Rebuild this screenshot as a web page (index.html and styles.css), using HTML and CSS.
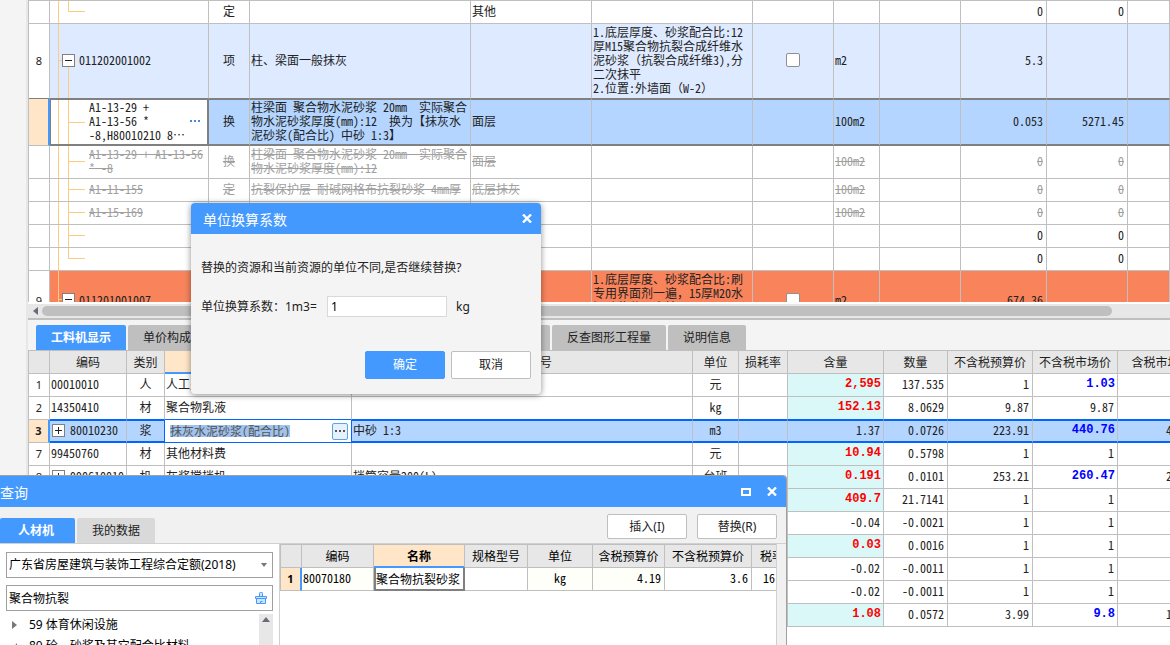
FILE: index.html
```html
<!DOCTYPE html>
<html lang="zh-CN">
<head>
<meta charset="utf-8">
<title>单位换算系数</title>
<link rel="stylesheet" href="styles.css">
</head>
<body>
<main class="workspace">
  <section class="bill-panel">
    <table class="grid bill-grid">
      <colgroup><col class="w-index"><col class="w-bill-code"><col class="w-kind"><col class="w-name"><col class="w-part"><col class="w-desc"><col class="w-check"><col class="w-unit"><col class="w-check"><col class="w-qty"><col class="w-price"><col></colgroup>
      <tbody>
      <tr class="row"><td></td><td class="tree leaf last"></td><td class="center">定</td><td></td><td>其他</td><td></td><td></td><td></td><td></td><td class="num">0</td><td class="num">0</td><td></td></tr>
      <tr class="row item item-tall before-current"><td class="center index">8</td><td class="tree parent"><div class="node"><button class="toggle minus" aria-label="折叠"></button>011202001002</div></td><td class="center">项</td><td>柱、梁面一般抹灰</td><td></td><td>1.底层厚度、砂浆配合比:12<br>厚M15聚合物抗裂合成纤维水<br>泥砂浆（抗裂合成纤维3),分<br>二次抹平<br>2.位置:外墙面（W-2）</td><td class="center"><input class="check" type="checkbox" aria-label="选择清单 8"></td><td>m2</td><td></td><td class="num">5.3</td><td></td><td></td></tr>
      <tr class="row current"><td class="index marked"></td><td class="tree leaf active-code"><div class="code-edit"><span>A1-13-29 +<br>A1-13-56 *<br>-8,H80010210 8…</span><button class="dots" aria-label="更多"><i></i><i></i><i></i></button></div></td><td class="center">换</td><td>柱梁面 聚合物水泥砂浆 20mm  实际聚合<br>物水泥砂浆厚度(mm):12  换为【抹灰水<br>泥砂浆(配合比) 中砂 1:3】</td><td>面层</td><td></td><td></td><td>100m2</td><td></td><td class="num">0.053</td><td class="num">5271.45</td><td></td></tr>
      <tr class="row struck row-double"><td></td><td class="tree leaf">A1-13-29 + A1-13-56<br>* -8</td><td class="center">换</td><td>柱梁面 聚合物水泥砂浆 20mm  实际聚合<br>物水泥砂浆厚度(mm):12</td><td>面层</td><td></td><td></td><td>100m2</td><td></td><td class="num">0</td><td class="num">0</td><td></td></tr>
      <tr class="row struck"><td></td><td class="tree leaf">A1-11-155</td><td class="center">定</td><td>抗裂保护层 耐碱网格布抗裂砂浆 4mm厚</td><td>底层抹灰</td><td></td><td></td><td>100m2</td><td></td><td class="num">0</td><td class="num">0</td><td></td></tr>
      <tr class="row struck"><td></td><td class="tree leaf">A1-15-169</td><td></td><td></td><td></td><td></td><td></td><td>100m2</td><td></td><td class="num">0</td><td class="num">0</td><td></td></tr>
      <tr class="row"><td></td><td class="tree leaf"></td><td></td><td></td><td></td><td></td><td></td><td></td><td></td><td class="num">0</td><td class="num">0</td><td></td></tr>
      <tr class="row"><td></td><td class="tree leaf last"></td><td></td><td></td><td></td><td></td><td></td><td></td><td></td><td class="num">0</td><td class="num">0</td><td></td></tr>
      <tr class="row item item-alert"><td class="center index">9</td><td class="tree parent"><div class="node"><button class="toggle minus" aria-label="折叠"></button>011201001007</div></td><td></td><td></td><td></td><td>1.底层厚度、砂浆配合比:刷<br>专用界面剂一遍，15厚M20水<br>泥砂浆分二次抹平<br>2.位置:内墙面</td><td class="center"><input class="check" type="checkbox" aria-label="选择清单 9"></td><td>m2</td><td></td><td class="num">674.36</td><td></td><td></td></tr>
      </tbody>
    </table>
  </section>

  <div class="hscroll"><svg width="5" height="8" viewBox="0 0 5 8"><path d="M5 0v8L0 4z" fill="#6b6b78"/></svg><div class="hscroll-track"><div class="hscroll-thumb"></div></div></div>

  <nav class="tabs">
    <button class="tab active">工料机显示</button><button class="tab">单价构成</button><button class="tab">标准换算</button><button class="tab">换算信息</button><button class="tab">特征及内容</button><button class="tab">工程量明细</button><button class="tab">反查图形工程量</button><button class="tab">说明信息</button>
  </nav>

  <section class="resource-panel">
    <table class="grid resource-grid">
      <colgroup><col class="w-index"><col class="w-res-code"><col class="w-res-kind"><col class="w-res-name"><col class="w-spec"><col class="w-unit"><col class="w-loss"><col class="w-content"><col class="w-count"><col class="w-cost"><col class="w-cost"><col class="w-tax"></colgroup>
      <thead><tr class="row"><th></th><th>编码</th><th>类别</th><th class="sorted">名称</th><th>规格及型号</th><th>单位</th><th>损耗率</th><th>含量</th><th>数量</th><th>不含税预算价</th><th>不含税市场价</th><th>含税市场价</th></tr></thead>
      <tbody>
      <tr class="row"><td class="center index">1</td><td>00010010</td><td class="center">人</td><td>人工费</td><td></td><td class="center">元</td><td></td><td class="num changed">2,595</td><td class="num">137.535</td><td class="num">1</td><td class="num market">1.03</td><td></td></tr>
      <tr class="row before-picked"><td class="center index">2</td><td>14350410</td><td class="center">材</td><td>聚合物乳液</td><td></td><td class="center">kg</td><td></td><td class="num changed">152.13</td><td class="num">8.0629</td><td class="num">9.87</td><td class="num">9.87</td><td></td></tr>
      <tr class="row picked"><td class="center index marked">3</td><td><div class="res-node"><button class="toggle plus" aria-label="展开"></button>80010230</div></td><td class="center kind">浆</td><td class="editing"><div class="editor"><input class="editor-text" value="抹灰水泥砂浆(配合比)" aria-label="名称"><button class="more" aria-label="选择"><i></i><i></i><i></i></button></div></td><td>中砂 1:3</td><td class="center">m3</td><td></td><td class="num">1.37</td><td class="num">0.0726</td><td class="num">223.91</td><td class="num market">440.76</td><td class="num">454.24</td></tr>
      <tr class="row"><td class="center index">7</td><td>99450760</td><td class="center">材</td><td>其他材料费</td><td></td><td class="center">元</td><td></td><td class="num changed">10.94</td><td class="num">0.5798</td><td class="num">1</td><td class="num">1</td><td></td></tr>
      <tr class="row"><td class="center index">8</td><td><div class="res-node"><button class="toggle plus" aria-label="展开"></button>990610010</div></td><td class="center">机</td><td>灰浆搅拌机</td><td>拌筒容量200(L)</td><td class="center">台班</td><td></td><td class="num changed">0.191</td><td class="num">0.0101</td><td class="num">253.21</td><td class="num market">260.47</td><td class="num">267.12</td></tr>
      <tr class="row"><td></td><td></td><td></td><td></td><td></td><td></td><td></td><td class="num changed">409.7</td><td class="num">21.7141</td><td class="num">1</td><td class="num">1</td><td></td></tr>
      <tr class="row"><td></td><td></td><td></td><td></td><td></td><td></td><td></td><td class="num">-0.04</td><td class="num">-0.0021</td><td class="num">1</td><td class="num">1</td><td></td></tr>
      <tr class="row"><td></td><td></td><td></td><td></td><td></td><td></td><td></td><td class="num changed">0.03</td><td class="num">0.0016</td><td class="num">1</td><td class="num">1</td><td></td></tr>
      <tr class="row"><td></td><td></td><td></td><td></td><td></td><td></td><td></td><td class="num">-0.02</td><td class="num">-0.0011</td><td class="num">1</td><td class="num">1</td><td></td></tr>
      <tr class="row"><td></td><td></td><td></td><td></td><td></td><td></td><td></td><td class="num">-0.02</td><td class="num">-0.0011</td><td class="num">1</td><td class="num">1</td><td></td></tr>
      <tr class="row"><td></td><td></td><td></td><td></td><td></td><td></td><td></td><td class="num changed">1.08</td><td class="num">0.0572</td><td class="num">3.99</td><td class="num market">9.8</td><td class="num">11.074</td></tr>
      </tbody>
    </table>
  </section>
</main>

<section class="query-window" aria-label="查询">
  <header class="titlebar query-title"><h2>查询</h2>
    <div class="window-buttons">
      <button aria-label="最大化"><svg width="10" height="8" viewBox="0 0 10 8"><path d="M1 1h8v6H1z" fill="none" stroke="#fff" stroke-width="2"/></svg></button>
      <button aria-label="关闭"><svg width="10" height="9" viewBox="0 0 10 9"><path d="M1 .5l8 8M9 .5l-8 8" stroke="#fff" stroke-width="2.400"/></svg></button>
    </div>
  </header>
  <div class="query-bar">
    <nav class="query-tabs"><button class="query-tab active">人材机</button><button class="query-tab">我的数据</button></nav>
    <div class="query-actions"><button class="button">插入(I)</button><button class="button">替换(R)</button></div>
  </div>
  <div class="query-body">
    <aside class="filters">
      <div class="field select-field"><select aria-label="定额库"><option>广东省房屋建筑与装饰工程综合定额(2018)</option></select><svg width="6" height="4" viewBox="0 0 6 4"><path d="M0 0h6L3 4z" fill="#777"/></svg></div>
      <div class="field"><input value="聚合物抗裂" aria-label="搜索"><button class="clear" aria-label="清除"><svg width="12" height="12" viewBox="0 0 12 12" fill="#cfe4ff" stroke="#4499ff"><path d="M1.500 6.500v5h9v-5M4.500 4.500v-3a1.500 1.500 0 0 1 3 0v3M.5 4.500h11v2H.5zM5.500 11V9.500h2"/></svg></button></div>
      <div class="catalog">
        <ul class="catalog-list">
          <li><svg width="5" height="8" viewBox="0 0 5 8"><path d="M0 0v8l5-4z" fill="#777"/></svg>59 体育休闲设施</li>
          <li><svg width="5" height="8" viewBox="0 0 5 8"><path d="M5 1v6H0z" fill="#777"/></svg>80 砼、砂浆及其它配合比材料</li>
        </ul>
        <div class="vscroll"><svg width="8" height="5" viewBox="0 0 8 5"><path d="M0 5h8L4 0z" fill="#6b6b78"/></svg></div>
      </div>
    </aside>
    <div class="results">
      <table class="grid result-grid">
        <colgroup><col class="w-index"><col class="w-result-code"><col class="w-result-name"><col class="w-result-spec"><col class="w-result-unit"><col class="w-result-taxed"><col class="w-result-net"><col class="w-result-rate"></colgroup>
        <thead><tr class="row"><th></th><th>编码</th><th class="sorted">名称</th><th>规格型号</th><th>单位</th><th>含税预算价</th><th>不含税预算价</th><th class="start">税率</th></tr></thead>
        <tbody><tr class="row"><td class="center index marked">1</td><td class="tint">80070180</td><td class="focus">聚合物抗裂砂浆</td><td></td><td class="center tint">kg</td><td class="num tint">4.19</td><td class="num">3.6</td><td class="start rate">16</td></tr></tbody>
      </table>
    </div>
  </div>
</section>

<section class="dialog" role="dialog" aria-labelledby="dialog-title">
  <header class="titlebar dialog-title"><h2 id="dialog-title">单位换算系数</h2><button aria-label="关闭"><svg width="10" height="9" viewBox="0 0 10 9"><path d="M1 .5l8 8M9 .5l-8 8" stroke="#fff" stroke-width="2.400"/></svg></button></header>
  <div class="dialog-body">
    <p>替换的资源和当前资源的单位不同,是否继续替换?</p>
    <div class="factor"><label for="factor">单位换算系数：1m3=</label><input id="factor" value="1"><span>kg</span></div>
    <div class="dialog-actions"><button class="button primary">确定</button><button class="button">取消</button></div>
  </div>
</section>
</body>
</html>
```
FILE: styles.css
```css
* { box-sizing: border-box; }
:root {
  --blue: #4499ff;
  --line: #bfbfbf;
  --ui: "Noto Sans", "Noto Sans CJK SC", sans-serif;
  --mono: "Noto Sans Mono CJK SC", "Liberation Mono", "Noto Sans CJK SC", monospace;
}
body { margin: 0; height: 100vh; overflow: hidden; position: relative; background: #f4f4f4; color: #222; font: 12px/14px var(--ui); }
button, input, select { font: inherit; color: inherit; padding: 0; margin: 0; border: 0; background: none; }
h2, p, ul { margin: 0; padding: 0; font-weight: normal; list-style: none; }
svg { display: block; flex: none; }

.workspace { display: flex; flex-direction: column; height: 100%; margin-left: 26px; border-left: 2px solid #e7e7e7; }
.bill-panel { flex: none; height: 304px; overflow: hidden; background: #fff; border-bottom: 2px solid #fff; }

/* grids */
.grid { border-collapse: separate; border-spacing: 0; table-layout: fixed; width: 100%; background: #fff; font: 12px/14px var(--mono); border-left: 1px solid var(--line); border-top: 1px solid var(--line); }
.grid td, .grid th { padding: 0 3px 2px 1px; border: 0 solid var(--line); border-right-width: 1px; border-bottom-width: 1px; text-align: left; white-space: pre; overflow: hidden; font-weight: normal; }
.grid th { background: #e7e7e7; text-align: center; padding: 0; }
.grid .center { text-align: center; padding: 0 0 2px; }
.grid .center.index { padding: 0; }
.grid .num { text-align: right; }
.grid .start { text-align: left; padding-left: 8px; }
.row { height: 23px; }
.row-double { height: 33px; }
.index { font-family: var(--ui); font-size: 11px; }
.grid .marked { background: #ffe6c8; border-right: 2px solid var(--blue); font-weight: bold; }
.grid .sorted { background: #ffe6c8; border-bottom: 2px solid var(--blue); font-weight: bold; }

.w-index { width: 21px; }
.w-bill-code { width: 159px; }
.w-kind { width: 41px; }
.w-name { width: 221px; }
.w-part { width: 121px; }
.w-desc { width: 161px; }
.w-check { width: 81px; }
.w-unit { width: 46px; }
.w-qty { width: 86px; }
.w-price { width: 81px; }

.item-tall { height: 75px; }
.item-alert { height: 60px; }
.item td { background-color: #deeaff; }
.item-alert td { background-color: #f9845c; }
.item .index { background: #fff; }
.before-current td { border-bottom-color: #808080; }
.grid .current td { background-color: #b3d5ff; border-top: 1px solid #808080; border-bottom: 2px solid #808080; }
.current { height: 47px; }
.grid .current .index { background: #ffe6c8; border-top: 0; border-bottom: 1px solid var(--line); }
.grid .current .active-code { background-color: #fff; border-left: 1px solid #808080; border-right: 2px solid #808080; }
.struck td { color: #a0a0a0; text-decoration: line-through; }

/* outline guides: outer branch, inner branch, stub to the node */
.grid .tree { background-repeat: no-repeat; background-image: linear-gradient(#ffcb80, #ffcb80), linear-gradient(#ffcb80, #ffcb80), linear-gradient(#ffcb80, #ffcb80); }
.grid .leaf { padding-left: 39px; background-position: 8px 0, 18px 0, 18px calc(50% - 1px); background-size: 1px 100%, 1px 100%, 17px 1px; }
.grid .last { background-size: 1px 100%, 1px 50%, 17px 1px; }
.grid .parent { padding-left: 12px; background-position: 8px 0, 18px 100%, 8px calc(50% - 1px); background-size: 1px 100%, 1px 50%, 5px 1px; }
.grid .active-code { padding-left: 38px; background-position: 7px 0, 17px 0, 17px 50%; }
.node, .res-node { display: flex; align-items: center; gap: 4px; }
.res-node { gap: 5px; padding-left: 1px; }
.toggle { position: relative; flex: none; width: 13px; height: 13px; border: 1px solid #808080; background: #fff; }
.toggle::before, .plus::after { content: ""; position: absolute; left: 2px; top: 5px; width: 7px; height: 1px; background: #222; }
.plus::after { transform: rotate(90deg); }
.code-edit { display: flex; align-items: center; justify-content: space-between; padding-right: 4px; }
.dots, .more { display: flex; align-items: center; justify-content: center; gap: 2px; }
.dots i, .more i { width: 2px; height: 2px; background: #428bd8; }
.check { appearance: none; display: block; margin: 0 auto; width: 14px; height: 14px; border: 1px solid #909090; border-radius: 2px; background: #fff; }

.hscroll { flex: none; display: flex; align-items: center; gap: 4px; height: 16px; padding: 0 58px 0 5px; background: #e7e7e7; border-bottom: 2px solid var(--line); }
.hscroll-track { flex: 1; }
.hscroll-thumb { height: 10px; border-radius: 5px; background: var(--line); }

.tabs { flex: none; display: flex; align-items: flex-end; gap: 2px; height: 30px; padding-left: 8px; }
.tab { height: 25px; padding: 0 15px; background: var(--line); border-radius: 2px 2px 0 0; }
.tab.active, .query-tab.active { background: var(--blue); color: #fff; font-weight: bold; }

.resource-panel { flex: 1; overflow: hidden; background: #fff; border-top: 1px solid var(--line); }
.resource-grid { width: 1178px; border-bottom: 0; border-top: 0; }
.w-res-code { width: 77px; }
.w-res-kind { width: 38px; }
.w-res-name { width: 187px; }
.w-spec { width: 341px; }
.w-loss { width: 49px; }
.w-content { width: 96px; }
.w-count { width: 64px; }
.w-cost { width: 85px; }
.w-tax { width: 88px; }
.grid .changed, .grid .market { font-family: "Liberation Mono", monospace; font-weight: bold; padding-right: 2px; }
.grid .changed { color: #f00; background: #daf8f8; }
.grid .market { color: #00f; }
.before-picked td:not(.index) { border-bottom-color: #0066ff; }
.grid .picked td:not(.index) { background: #b3d5ff; border-top: 1px solid #0066ff; border-bottom: 2px solid #0066ff; }
.grid .picked .kind { border-right-color: #0066ff; }
.grid .picked td.editing { background: #fff; border-top: 0; border-bottom-width: 1px; border-right-color: #0066ff; padding-bottom: 0; }
.editor { display: flex; align-items: center; justify-content: space-between; padding-left: 4px; }
.editor-text { width: 120px; height: 12px; background: #9fc3ee; color: #555; }
.more { width: 16px; height: 17px; border: 1px solid #5aa5e6; border-radius: 2px; background: #e5f1fb; }
.more i { background: #555; }

.titlebar { display: flex; align-items: center; justify-content: space-between; height: 31px; background: var(--blue); color: #fff; }
.titlebar h2 { font-size: 14px; line-height: 20px; padding-top: 2px; }
.button { width: 80px; height: 25px; border: 1px solid var(--line); border-radius: 2px; background: #fff; }

.query-window { position: absolute; left: 0; top: 475px; bottom: 0; width: 787px; display: flex; flex-direction: column; background: #f1f1f1; border-top: 1px solid #a0a0a0; border-right: 1px solid #a0a0a0; border-radius: 0 4px 0 0; overflow: hidden; }
.query-title { flex: none; padding-right: 9px; }
.window-buttons { display: flex; gap: 16px; }
.query-bar { flex: none; display: flex; justify-content: space-between; align-items: flex-end; height: 37px; padding-right: 9px; border-bottom: 1px solid #d0d0d0; }
.query-tabs { display: flex; gap: 2px; }
.query-tab { height: 25px; padding: 0 15px; background: #d9d9d9; border-radius: 2px 2px 0 0; }
.query-tab.active { padding: 0 21px 0 18px; }
.query-actions { display: flex; gap: 10px; padding-bottom: 4px; }
.query-body { flex: 1; min-height: 0; display: flex; margin-right: 9px; background: #fff; border-right: 1px solid #d0d0d0; }
.filters { flex: none; width: 280px; display: flex; flex-direction: column; gap: 7px; padding: 8px 6px 0; border-right: 1px solid #d0d0d0; color: #000; }
.field { flex: none; display: flex; align-items: center; height: 26px; padding: 0 5px 0 2px; border: 1px solid #a0a0a0; background: #fff; }
.field select, .field input { appearance: none; flex: 1; min-width: 0; height: 24px; }
.catalog { flex: 1; min-height: 0; display: flex; overflow: hidden; margin-top: -4px; }
.catalog-list { flex: 1; }
.catalog-list li { display: flex; align-items: center; gap: 12px; height: 20px; padding-left: 6px; white-space: nowrap; }
.catalog-list li:first-child { height: 22px; }
.vscroll { width: 14px; padding: 3px; background: #e7e7e7; }
.results { flex: 1; min-width: 0; overflow: hidden; }
.result-grid { width: 512px; color: #000; }
.w-result-code { width: 72px; }
.w-result-name { width: 91px; }
.w-result-spec { width: 63px; }
.w-result-unit { width: 65px; }
.w-result-taxed { width: 72px; }
.w-result-net { width: 87px; }
.w-result-rate { width: 40px; }
.grid .tint { background: #fffffa; }
.grid .rate { padding-left: 11px; }
.grid .focus { border: 2px solid #808080; border-top: 0; padding: 0; }

.dialog { position: absolute; left: 191px; top: 203px; width: 350px; border-radius: 4px; overflow: hidden; background: #f4f4f4; box-shadow: 0 1px 6px rgba(0, 0, 0, .45); }
.dialog-title { padding: 0 9px 0 12px; }
.dialog-body { padding: 24px 10px 15px; }
.dialog-body p { height: 20px; line-height: 20px; }
.factor { display: flex; align-items: center; height: 21px; margin: 18px 0 34px; }
.factor label { width: 126px; white-space: nowrap; }
.factor input { width: 120px; height: 21px; padding-left: 3px; margin-right: 9px; border: 1px solid #d9d9d9; background: #fff; color: #000; }
.dialog-actions { display: flex; justify-content: flex-end; gap: 6px; }
.dialog-actions .button { height: 28px; }
.button.primary { background: var(--blue); border-color: var(--blue); color: #fff; }
```
